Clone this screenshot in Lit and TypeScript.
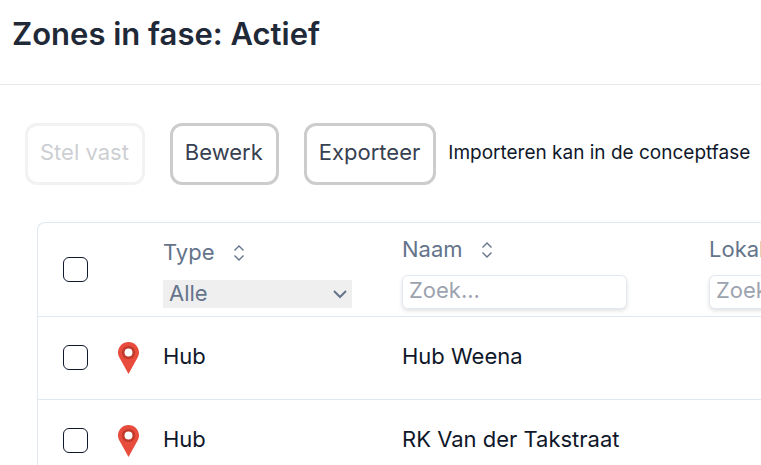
import { LitElement, html, css, svg } from "lit";
import { customElement, state } from "lit/decorators.js";

interface Zone {
  type: string;
  naam: string;
  lokaleId: string;
}

const zones: Zone[] = [
  { type: "Hub", naam: "Hub Weena", lokaleId: "" },
  { type: "Hub", naam: "RK Van der Takstraat", lokaleId: "" },
];

const sortIcon = svg`<svg class="sort-icon" viewBox="0 0 12 18" aria-hidden="true">
  <path d="M1.500 6.500 6 2l4.500 4.500M1.500 11.500 6 16l4.500-4.500" fill="none" stroke="currentColor" stroke-width="1.400" />
</svg>`;

const pinIcon = svg`<svg class="pin" viewBox="0 0 21 32" aria-hidden="true">
  <path d="M10.500 0C4.700 0 0 4.700 0 10.500c0 2.200.7 4.200 1.800 5.800L10.500 32l8.700-15.700c1.100-1.600 1.800-3.600 1.800-5.800C21 4.700 16.300 0 10.500 0Z" fill="#e74c3c" />
  <circle cx="10.500" cy="10.500" r="5.300" fill="#fff" stroke="#c0392b" stroke-width="2.600" />
</svg>`;

@customElement("app-root")
export class AppRoot extends LitElement {
  @state() private selected = new Set<number>();

  static styles = css`
    :host {
      display: flex;
      flex-direction: column;
      height: 100vh;
      overflow: hidden;
      background: #fff;
      color: #0f172a;
      font: 22px/32px Inter, sans-serif;
    }
    *, *::before { box-sizing: border-box; }
    .page-head {
      padding: 14px 12px 30px;
      border-bottom: 1px solid #e5e7eb;
    }
    .title {
      margin: 0;
      color: #1f2937;
      font-size: 31px;
      line-height: 40px;
      font-weight: 600;
    }
    .content {
      flex: 1;
      min-height: 0;
      overflow: hidden;
      padding: 38px 0 0 25px;
    }
    .actions {
      display: flex;
      align-items: center;
      white-space: nowrap;
    }
    .action {
      margin-right: 25px;
      padding: 10px 13px 14px 12px;
      border: 3px solid #ccc;
      border-radius: 12px;
      background: #fff;
      color: #374151;
      font: inherit;
    }
    .action:last-of-type { margin-right: 12px; }
    .action:disabled { opacity: 0.25; }
    .hint { font-size: 19px; padding-bottom: 2px; }
    .frame {
      margin: 37px 0 0 12px;
      border: 1px solid #e2e8f0;
      border-right: 0;
      border-radius: 8px 0 0 0;
      overflow: hidden;
    }
    .zones {
      width: 966px;
      table-layout: fixed;
      border-collapse: collapse;
    }
    .col-check { width: 68px; }
    .col-pin { width: 45px; }
    .col-type { width: 239px; }
    .col-text { width: 307px; }
    th, td {
      padding: 0 12px;
      text-align: left;
      vertical-align: middle;
      font-weight: 400;
    }
    th { height: 93px; padding-top: 2px; color: #64748b; }
    td { height: 83px; padding-bottom: 4px; }
    tr { border-bottom: 1px solid #e2e8f0; }
    .check-cell { padding: 0 0 0 25px; }
    .pin-cell { padding-bottom: 0; }
    .check {
      display: block;
      appearance: none;
      width: 25px;
      height: 25px;
      margin: 0;
      border: 1px solid #0f172a;
      border-radius: 6px;
    }
    .check:checked { background: #0f172a; }
    .head-stack {
      display: flex;
      flex-direction: column;
      align-items: flex-start;
      gap: 8px;
    }
    .sort {
      display: flex;
      align-items: center;
      gap: 18px;
      padding: 0;
      border: 0;
      background: none;
      color: inherit;
      font: inherit;
      line-height: 36px;
    }
    .select-head { gap: 10px; padding-top: 2px; }
    .sort-icon { width: 12px; height: 18px; margin-top: 2px; }
    .select-wrap {
      display: grid;
      align-items: center;
      width: 189px;
    }
    .select-wrap > * { grid-area: 1 / 1; }
    .filter {
      appearance: none;
      width: 100%;
      height: 28px;
      padding: 0 6px 2px;
      border: 0;
      border-radius: 0;
      background: #efefef;
      color: inherit;
      font: inherit;
      line-height: 26px;
    }
    .chevron {
      justify-self: end;
      width: 14px;
      height: 10px;
      margin-right: 5px;
      pointer-events: none;
    }
    .search {
      width: 225px;
      height: 34px;
      padding: 0 6px 4px;
      border: 1px solid #e2e8f0;
      border-radius: 6px;
      background: #fff;
      box-shadow: 0 2px 4px rgba(0, 0, 0, 0.12);
      color: #0f172a;
      font: inherit;
      line-height: 28px;
    }
    .search::placeholder { color: #9ca3af; opacity: 1; }
    .pin { display: block; width: 21px; height: 32px; }
  `;

  private toggle(index: number) {
    const next = new Set(this.selected);
    next.has(index) ? next.delete(index) : next.add(index);
    this.selected = next;
  }

  private toggleAll() {
    this.selected = this.selected.size === zones.length
      ? new Set()
      : new Set(zones.map((_, i) => i));
  }

  private searchHead(label: string) {
    return html`<th scope="col">
      <div class="head-stack">
        <button class="sort" type="button">${label}${sortIcon}</button>
        <input class="search" type="text" placeholder="Zoek..." aria-label=${label} />
      </div>
    </th>`;
  }

  render() {
    return html`
      <header class="page-head"><h1 class="title">Zones in fase: Actief</h1></header>
      <main class="content">
        <div class="actions">
          <button class="action" type="button" disabled>Stel vast</button>
          <button class="action" type="button">Bewerk</button>
          <button class="action" type="button">Exporteer</button>
          <span class="hint">Importeren kan in de conceptfase</span>
        </div>
        <div class="frame">
          <table class="zones">
            <colgroup>
              <col class="col-check" /><col class="col-pin" /><col class="col-type" />
              <col class="col-text" /><col class="col-text" />
            </colgroup>
            <thead>
              <tr>
                <th class="check-cell" scope="col">
                  <input class="check" type="checkbox" aria-label="Alles selecteren"
                    .checked=${this.selected.size === zones.length} @change=${this.toggleAll} />
                </th>
                <th></th>
                <th scope="col">
                  <div class="head-stack select-head">
                    <button class="sort" type="button">Type${sortIcon}</button>
                    <div class="select-wrap">
                      <select class="filter" aria-label="Type">
                        <option>Alle</option>
                        <option>Hub</option>
                      </select>
                      <svg class="chevron" viewBox="0 0 14 10" aria-hidden="true">
                        <path d="M1 2l6 6 6-6" fill="none" stroke="currentColor" stroke-width="2" />
                      </svg>
                    </div>
                  </div>
                </th>
                ${this.searchHead("Naam")}
                ${this.searchHead("Lokale ID")}
              </tr>
            </thead>
            <tbody>
              ${zones.map((zone, i) => html`
                <tr>
                  <td class="check-cell">
                    <input class="check" type="checkbox" aria-label=${zone.naam}
                      .checked=${this.selected.has(i)} @change=${() => this.toggle(i)} />
                  </td>
                  <td class="pin-cell">${pinIcon}</td>
                  <td>${zone.type}</td>
                  <td>${zone.naam}</td>
                  <td>${zone.lokaleId}</td>
                </tr>`)}
            </tbody>
          </table>
        </div>
      </main>
    `;
  }
}
